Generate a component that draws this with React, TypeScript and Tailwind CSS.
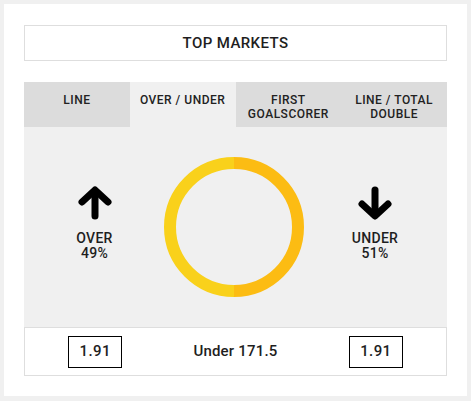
import React from 'react';

const tabs = [
    { label: 'LINE' },
    { label: 'OVER / UNDER', active: true },
    { label: 'FIRST GOALSCORER' },
    { label: 'LINE / TOTAL DOUBLE' },
];

function Arrow({ down = false }: { down?: boolean }) {
    return (
        <svg width="36" height="34" viewBox="0 0 36 34" className={down ? 'rotate-180' : ''}>
            <g fill="none" stroke="#000" strokeWidth="7" strokeLinecap="round" strokeLinejoin="round">
                <path d="M18 30V6" />
                <path d="M5 16L18 4L31 16" />
            </g>
        </svg>
    );
}

function Donut() {
    // two halves: left is the lighter yellow, right the deeper one
    return (
        <svg width="140" height="140" viewBox="0 0 140 140">
            <path d="M70 6A64 64 0 0 0 70 134" fill="none" stroke="#f9d11b" strokeWidth="12" />
            <path d="M70 6A64 64 0 0 1 70 134" fill="none" stroke="#fcbc13" strokeWidth="12" />
        </svg>
    );
}

export default function App() {
    return (
        <div className="w-[471px] h-[401px] bg-[#f0f0f0] p-[4px] pb-[5px] font-['Roboto',sans-serif] text-[#1e1e1e]">
            <div className="bg-white w-full h-full px-[20px] pt-[21px]">
                {/* header */}
                <div className="h-[36px] border border-[#dedede] flex items-center justify-center text-[15px] font-medium tracking-[0.4px]">
                    TOP MARKETS
                </div>

                {/* tabs */}
                <div className="mt-[21px] grid grid-cols-4 h-[45px]">
                    {tabs.map((t) => (
                        <div
                            key={t.label}
                            className={`${t.active ? 'bg-[#f0f0f0]' : 'bg-[#dcdcdc]'} pt-[11px] px-2 text-center text-[12px] leading-[14px] font-medium tracking-[0.5px] text-[#222]`}
                        >
                            {t.label}
                        </div>
                    ))}
                </div>

                {/* chart */}
                <div className="h-[200px] bg-[#f0f0f0] grid grid-cols-3 items-center">
                    <div className="flex flex-col items-center -mt-[7px]">
                        <Arrow />
                        <div className="mt-[11px] text-[14px] leading-[15px] font-medium text-center tracking-[0.3px]">
                            OVER
                            <br />
                            49%
                        </div>
                    </div>
                    <div className="flex justify-center -ml-[3px]">
                        <Donut />
                    </div>
                    <div className="flex flex-col items-center -mt-[7px] -ml-[3px]">
                        <Arrow down />
                        <div className="mt-[11px] text-[14px] leading-[15px] font-medium text-center tracking-[0.3px]">
                            UNDER
                            <br />
                            51%
                        </div>
                    </div>
                </div>

                {/* odds row */}
                <div className="h-[49px] border border-[#dedede] grid grid-cols-3 items-center">
                    <div className="flex justify-center">
                        <div className="w-[54px] h-[32px] border border-black flex items-center justify-center text-[15px] font-medium tracking-[0.4px]">
                            1.91
                        </div>
                    </div>
                    <div className="text-center text-[15px] font-medium tracking-[0.2px]">Under 171.5</div>
                    <div className="flex justify-center">
                        <div className="w-[54px] h-[32px] border border-black flex items-center justify-center text-[15px] font-medium tracking-[0.4px]">
                            1.91
                        </div>
                    </div>
                </div>
            </div>
        </div>
    );
}
